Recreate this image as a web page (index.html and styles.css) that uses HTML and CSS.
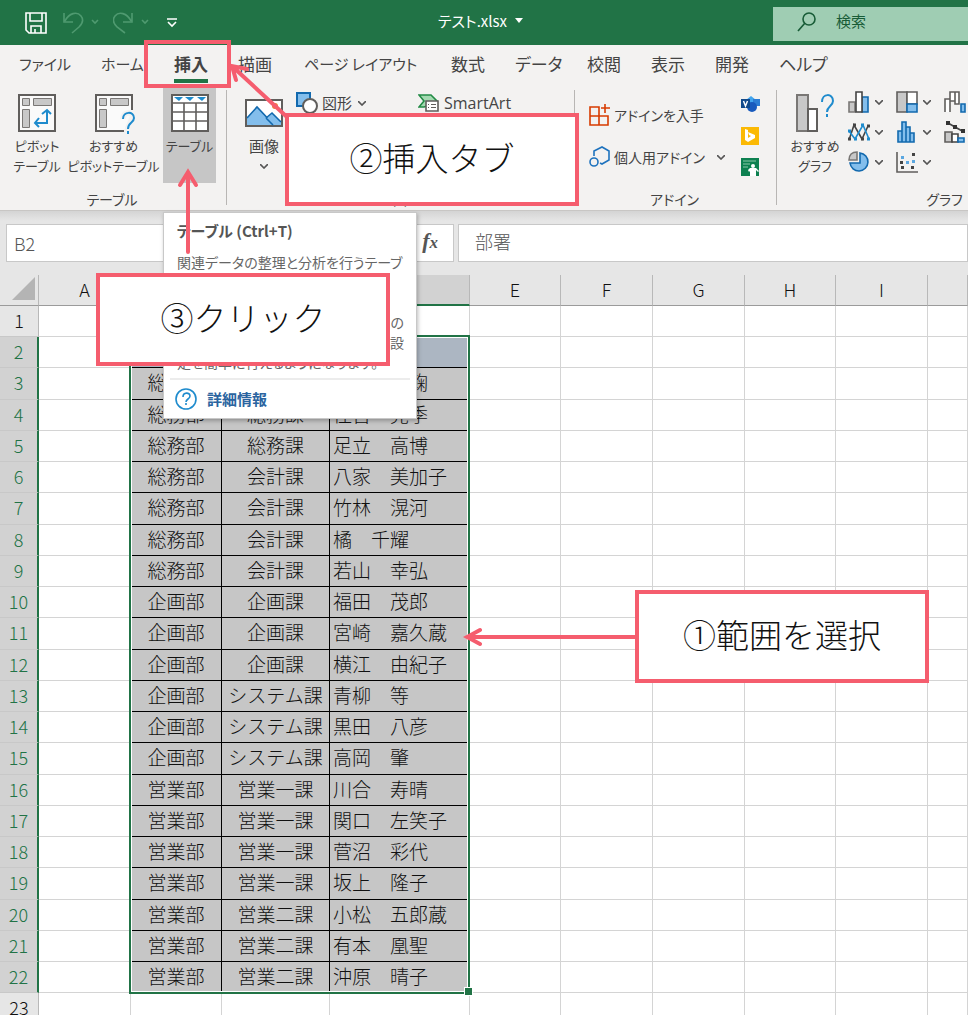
FILE: index.html
```html
<!DOCTYPE html>
<html lang="ja">
<head>
<meta charset="utf-8">
<title>テスト.xlsx</title>
<link rel="stylesheet" href="styles.css">
</head>
<body>
<header class="titlebar">
  <div class="quick">
    <button class="icon-btn" aria-label="保存"><svg width="22" height="22" viewBox="0 0 22 22" fill="none" stroke="#fff" stroke-width="1.600"><path d="M1 1h20v20H4l-3-3zM5 1v8h12V1M6 21v-7h10v7M10 17v4"/></svg></button>
    <button class="icon-btn undo" aria-label="元に戻す"><svg width="36" height="22" viewBox="0 0 36 22" fill="none" stroke="#4f9a70" stroke-width="1.600"><path d="M1 1v9h9M2 9C6 1 14-1 18 4s0 9-2 11l-7 6"/><path d="M29 8l3 3 3-3"/></svg></button>
    <button class="icon-btn redo" aria-label="やり直し"><svg width="36" height="22" viewBox="0 0 36 22" fill="none" stroke="#4f9a70" stroke-width="1.600"><path d="M19 1v9h-9M18 9C14 1 6-1 2 4s0 9 2 11l8 6"/><path d="M29 8l3 3 3-3"/></svg></button>
    <button class="icon-btn custom" aria-label="カスタマイズ"><svg width="10" height="10" viewBox="0 0 10 10" fill="none" stroke="#fff" stroke-width="1.600"><path d="M0 1h10M1 4l4 4 4-4"/></svg></button>
  </div>
  <button class="doc-name">テスト.xlsx <svg width="8" height="5" viewBox="0 0 8 5"><path d="M0 0h8L4 5z" fill="#fff"/></svg></button>
  <label class="search">
    <svg width="19" height="20" viewBox="0 0 19 20" fill="none" stroke="#185c37" stroke-width="1.600"><circle cx="12" cy="7" r="6"/><path d="M8 11l-7 8"/></svg>
    <input type="text" placeholder="検索" aria-label="検索">
  </label>
</header>

<nav class="tabs">
  <button>ファイル</button><button>ホーム</button><button class="active">挿入</button><button>描画</button><button>ページ レイアウト</button><button>数式</button><button>データ</button><button>校閲</button><button>表示</button><button>開発</button><button>ヘルプ</button>
</nav>

<section class="ribbon">
  <div class="group g-table">
    <div class="tools">
      <button class="big pivot"><svg width="38" height="38" viewBox="0 0 38 38" fill="none"><path d="M1 1h36v36H1z" fill="#fafafa" stroke="#605e5c" stroke-width="2"/><g fill="#c8c8c8" stroke="#797775"><path d="M4.500 4.500h7v7h-7zM15.500 4.500h18v7h-18zM4.500 15.500h7v18h-7z"/></g><path d="M17 29h12V16M21 24l-4 5 4 4M24 20l5-4 4 4" stroke="#1e8bcd" stroke-width="2"/></svg><span>ピボット<br>テーブル</span></button>
      <button class="big suggest"><svg width="40" height="40" viewBox="0 0 40 40" fill="none"><path d="M37 16V1H1v36h28" fill="#fafafa" stroke="#605e5c" stroke-width="2"/><g fill="#c8c8c8" stroke="#797775"><path d="M4.500 4.500h7v7h-7zM15.500 4.500h18v7h-18zM4.500 15.500h7v18h-7z"/></g><path d="M28 25c0-8 11-8 11-1 0 5-6 5-6 12M33 37v3" stroke="#f3f2f1" stroke-width="6"/><path d="M28 25c0-8 11-8 11-1 0 5-6 4-6 11M33 37v3" stroke="#1e8bcd" stroke-width="2"/></svg><span>おすすめ<br>ピボットテーブル</span></button>
      <button class="big pressed"><svg width="38" height="38" viewBox="0 0 38 38"><path d="M1 1h36v36H1z" fill="#fff" stroke="#605e5c" stroke-width="2"/><path d="M1 9h36M1 18h36M1 27h36M13 9v28M25 9v28" stroke="#605e5c" stroke-width="1.600"/><path d="M3 3h9l-4 4zM14 3h9l-4 4zM26 3h9l-4 4z" fill="#1e8bcd"/></svg><span>テーブル</span></button>
    </div>
    <div class="caption">テーブル</div>
  </div>
  <div class="group g-figure">
    <div class="tools">
      <button class="big picture"><svg width="38" height="38" viewBox="0 0 38 38"><path d="M1 6h36v26H1z" fill="#fff" stroke="#605e5c" stroke-width="2"/><circle cx="30" cy="12" r="3" fill="#ed7d31"/><path d="M2 24L12 13l17 18H2z" fill="#83beec"/><path d="M2 24L12 13l17 18" fill="none" stroke="#1269ae" stroke-width="1.600"/><path d="M21 25l6-6 9 9v3H27z" fill="#83beec"/><path d="M21 24l6-5 9 9M21 24l7 7" fill="none" stroke="#1269ae" stroke-width="1.600"/></svg><span>画像</span><svg class="chev" width="8" height="5" viewBox="0 0 8 5"><path d="M0 0l4 4 4-4"/></svg></button>
      <button class="small"><svg width="22" height="22" viewBox="0 0 22 22"><path d="M1 1h13v13H1z" fill="#83beec" stroke="#1269ae" stroke-width="2"/><circle cx="14" cy="14" r="7" fill="#fff" stroke="#605e5c" stroke-width="2"/></svg>図形<svg class="chev" width="8" height="5" viewBox="0 0 8 5"><path d="M0 0l4 4 4-4"/></svg></button>
      <button class="small smart"><svg width="22" height="18" viewBox="0 0 22 18"><path d="M1 1h12l6 6-3 3-10 3H1l5-6z" fill="#a3d9b1" stroke="#228b45" stroke-width="1.600"/><path d="M8 7h12v10H8z" fill="#fff" stroke="#605e5c" stroke-width="1.600"/><path d="M10 10.500h1M13 10.500h5M10 13.500h1M13 13.500h5" stroke="#605e5c"/></svg>SmartArt</button>
    </div>
    <div class="caption">図</div>
  </div>
  <div class="group g-addin">
    <div class="tools">
      <div class="stack">
        <button class="small"><svg width="21" height="22" viewBox="0 0 21 22" fill="none" stroke="#d83b01" stroke-width="1.600"><path d="M1 3h9v18H1zM1 12h18v9H10M10 12h9M16 0v9M12 4h9"/></svg>アドインを入手</button>
        <button class="small"><svg width="21" height="22" viewBox="0 0 21 22" fill="none" stroke="#1e73be" stroke-width="1.600"><path d="M5 10V5l8-4 7 4v9l-7 4-2-1"/><circle cx="5" cy="16" r="4"/></svg>個人用アドイン<svg class="chev" width="8" height="5" viewBox="0 0 8 5"><path d="M0 0l4 4 4-4"/></svg></button>
      </div>
      <div class="apps">
        <button aria-label="Visio"><svg width="19" height="18" viewBox="0 0 19 18"><path d="M10 0l5 4-5 5-5-5z" fill="#41a5ee"/><path d="M12 3h7v7h-7z" fill="#2b7cd3"/><circle cx="11" cy="11" r="5" fill="#185abd"/><path d="M0 3h9v9H0z" fill="#114a8b"/><path d="M2.500 5l2 5 2-5" fill="none" stroke="#fff" stroke-width="1.400"/></svg></button>
        <button aria-label="Bing"><svg width="18" height="18" viewBox="0 0 18 18"><path d="M0 0h18v18H0z" fill="#fbb904"/><path d="M4 2l3 1v8l3-2-2-1-1-3 7 3v3l-7 4-3-2z" fill="#fff"/></svg></button>
        <button aria-label="People Graph"><svg width="18" height="18" viewBox="0 0 18 18"><path d="M0 0h18v18H0z" fill="#0d8050"/><path d="M2 3h13M2 6h7M2 9h5" stroke="#8cc9a8"/><circle cx="12" cy="8" r="2" fill="#fff"/><path d="M7 12l2-2h6l3 3-1 1-2-2v6H9v-5l-1 1z" fill="#fff"/></svg></button>
      </div>
    </div>
    <div class="caption">アドイン</div>
  </div>
  <div class="group g-chart">
    <div class="tools">
      <button class="big rec"><svg width="38" height="38" viewBox="0 0 38 38" fill="none"><path d="M1 1h11v36H1z" fill="#c8c8c8" stroke="#797775" stroke-width="2"/><path d="M12 15h9v22h-9z" fill="#fff" stroke="#605e5c" stroke-width="2"/><path d="M26 8c0-9 11-9 11-1 0 5-6 5-6 11M31 20v3" stroke="#1e8bcd" stroke-width="2"/></svg><span>おすすめ<br>グラフ</span></button>
      <div class="charts">
        <button aria-label="縦棒"><svg width="22" height="22" viewBox="0 0 22 22" stroke-width="1.600"><path d="M1 11h6v10H1z" fill="#c8c8c8" stroke="#797775"/><path d="M14 6h6v15h-6z" fill="#83beec" stroke="#1269ae"/><path d="M8 1h6v20H8z" fill="#fff" stroke="#444"/></svg><svg class="chev" width="8" height="5" viewBox="0 0 8 5"><path d="M0 0l4 4 4-4"/></svg></button>
        <button aria-label="階層構造"><svg width="22" height="22" viewBox="0 0 22 22" stroke-width="1.600"><path d="M1 1h10v20H1z" fill="#c8c8c8" stroke="#605e5c"/><path d="M11 1h10v12H11z" fill="#fff" stroke="#605e5c"/><path d="M11 13h10v8H11z" fill="#83beec" stroke="#1269ae"/></svg><svg class="chev" width="8" height="5" viewBox="0 0 8 5"><path d="M0 0l4 4 4-4"/></svg></button>
        <button aria-label="ウォーターフォール"><svg width="22" height="22" viewBox="0 0 22 22" stroke-width="1.600"><path d="M1 21V8h5v13M6 9V1h5v9H6M11 4V1h4v12h-4V9" fill="#fff" stroke="#605e5c"/><path d="M17 13h4v8h-4z" fill="#83beec" stroke="#1269ae"/></svg></button>
        <button aria-label="折れ線"><svg width="22" height="20" viewBox="0 0 22 20" fill="none" stroke-width="1.600"><path d="M1 18L6 3l8 14 6-13" stroke="#444"/><path d="M1 9l6 8L15 3l6 14" stroke="#1e8bcd"/><path d="M0 17h3M5 3h3M13 17h3M19 4h3" stroke="#444" stroke-width="3"/><path d="M0 9h3M6 17h3M13 3h3M19 17h3" stroke="#1e8bcd" stroke-width="3"/></svg><svg class="chev" width="8" height="5" viewBox="0 0 8 5"><path d="M0 0l4 4 4-4"/></svg></button>
        <button aria-label="統計"><svg width="22" height="22" viewBox="0 0 22 22"><path d="M2 10h4v11H2zM6 1h4v20H6zM10 6h4v15h-4zM14 12h4v9h-4z" fill="#83beec" stroke="#1269ae" stroke-width="1.600"/></svg><svg class="chev" width="8" height="5" viewBox="0 0 8 5"><path d="M0 0l4 4 4-4"/></svg></button>
        <button aria-label="複合"><svg width="22" height="22" viewBox="0 0 22 22" stroke-width="1.600"><path d="M1 11h7v10H1z" fill="#c8c8c8" stroke="#605e5c"/><path d="M8 13h6v8H8z" fill="#fff" stroke="#444"/><path d="M14 17h6v4h-6z" fill="#83beec" stroke="#1269ae"/><path d="M4 2l7 4 9 5" fill="none" stroke="#444"/><path d="M2 2h4M9 6h4M17 10h4" stroke="#333" stroke-width="4"/></svg></button>
        <button aria-label="円"><svg width="22" height="22" viewBox="0 0 22 22" stroke-width="1.600"><path d="M12 2a9 9 0 1 1-10 10h10z" fill="#83beec" stroke="#1269ae"/><path d="M9 1v8H1c0-5 3-8 8-8z" fill="#c8c8c8" stroke="#797775"/></svg><svg class="chev" width="8" height="5" viewBox="0 0 8 5"><path d="M0 0l4 4 4-4"/></svg></button>
        <button aria-label="散布図"><svg width="22" height="22" viewBox="0 0 22 22"><path d="M1 1v20h21" fill="none" stroke="#605e5c" stroke-width="1.600"/><path d="M4 10h3v3H4zM16 2h3v3h-3zM5 15h3v3H5zM15 15h3v3h-3z" fill="#444"/><path d="M5 5h3v3H5zM10 10h3v3h-3zM16 9h3v3h-3z" fill="#5ba7e0"/></svg><svg class="chev" width="8" height="5" viewBox="0 0 8 5"><path d="M0 0l4 4 4-4"/></svg></button>
      </div>
    </div>
    <div class="caption">グラフ</div>
  </div>
</section>

<section class="formula">
  <input class="name-box" type="text" value="B2" aria-label="名前ボックス">
  <button class="fx"><i>f<small>x</small></i></button>
  <input class="formula-box" type="text" value="部署" aria-label="数式バー">
</section>

<main class="sheet">
<table class="grid">
<colgroup><col class="c-row"><col class="c-a"><col class="c-b"><col class="c-c"><col class="c-d"><col class="c-e"><col class="c-a"><col class="c-a"><col class="c-e"><col class="c-a"><col></colgroup>
<thead><tr><th class="corner"><svg width="23" height="23" viewBox="0 0 23 23"><path d="M23 0v23H0z" fill="#b4b4b4"/></svg></th><th>A</th><th class="sel"></th><th class="sel"></th><th class="sel"></th><th>E</th><th>F</th><th>G</th><th>H</th><th>I</th><th></th></tr></thead>
<tbody>
<tr><th>1</th><td></td><td></td><td></td><td></td><td></td><td></td><td></td><td></td><td></td><td></td></tr>
<tr class="data head"><th>2</th><td></td><td></td><td></td><td></td><td></td><td></td><td></td><td></td><td></td><td></td></tr>
<tr class="data"><th>3</th><td></td><td>総務部</td><td></td><td>　　　　鞠</td><td></td><td></td><td></td><td></td><td></td><td></td></tr>
<tr class="data"><th>4</th><td></td><td>総務部</td><td>総務課</td><td>住吉　亮季</td><td></td><td></td><td></td><td></td><td></td><td></td></tr>
<tr class="data"><th>5</th><td></td><td>総務部</td><td>総務課</td><td>足立　高博</td><td></td><td></td><td></td><td></td><td></td><td></td></tr>
<tr class="data"><th>6</th><td></td><td>総務部</td><td>会計課</td><td>八家　美加子</td><td></td><td></td><td></td><td></td><td></td><td></td></tr>
<tr class="data"><th>7</th><td></td><td>総務部</td><td>会計課</td><td>竹林　滉河</td><td></td><td></td><td></td><td></td><td></td><td></td></tr>
<tr class="data"><th>8</th><td></td><td>総務部</td><td>会計課</td><td>橘　千耀</td><td></td><td></td><td></td><td></td><td></td><td></td></tr>
<tr class="data"><th>9</th><td></td><td>総務部</td><td>会計課</td><td>若山　幸弘</td><td></td><td></td><td></td><td></td><td></td><td></td></tr>
<tr class="data"><th>10</th><td></td><td>企画部</td><td>企画課</td><td>福田　茂郎</td><td></td><td></td><td></td><td></td><td></td><td></td></tr>
<tr class="data"><th>11</th><td></td><td>企画部</td><td>企画課</td><td>宮崎　嘉久蔵</td><td></td><td></td><td></td><td></td><td></td><td></td></tr>
<tr class="data"><th>12</th><td></td><td>企画部</td><td>企画課</td><td>横江　由紀子</td><td></td><td></td><td></td><td></td><td></td><td></td></tr>
<tr class="data"><th>13</th><td></td><td>企画部</td><td>システム課</td><td>青柳　等</td><td></td><td></td><td></td><td></td><td></td><td></td></tr>
<tr class="data"><th>14</th><td></td><td>企画部</td><td>システム課</td><td>黒田　八彦</td><td></td><td></td><td></td><td></td><td></td><td></td></tr>
<tr class="data"><th>15</th><td></td><td>企画部</td><td>システム課</td><td>高岡　肇</td><td></td><td></td><td></td><td></td><td></td><td></td></tr>
<tr class="data"><th>16</th><td></td><td>営業部</td><td>営業一課</td><td>川合　寿晴</td><td></td><td></td><td></td><td></td><td></td><td></td></tr>
<tr class="data"><th>17</th><td></td><td>営業部</td><td>営業一課</td><td>関口　左笑子</td><td></td><td></td><td></td><td></td><td></td><td></td></tr>
<tr class="data"><th>18</th><td></td><td>営業部</td><td>営業一課</td><td>菅沼　彩代</td><td></td><td></td><td></td><td></td><td></td><td></td></tr>
<tr class="data"><th>19</th><td></td><td>営業部</td><td>営業一課</td><td>坂上　隆子</td><td></td><td></td><td></td><td></td><td></td><td></td></tr>
<tr class="data"><th>20</th><td></td><td>営業部</td><td>営業二課</td><td>小松　五郎蔵</td><td></td><td></td><td></td><td></td><td></td><td></td></tr>
<tr class="data"><th>21</th><td></td><td>営業部</td><td>営業二課</td><td>有本　凰聖</td><td></td><td></td><td></td><td></td><td></td><td></td></tr>
<tr class="data"><th>22</th><td></td><td>営業部</td><td>営業二課</td><td>沖原　晴子</td><td></td><td></td><td></td><td></td><td></td><td></td></tr>
<tr><th>23</th><td></td><td></td><td></td><td></td><td></td><td></td><td></td><td></td><td></td><td></td></tr>
</tbody>
</table>
<div class="selection"></div>
</main>

<aside class="tooltip">
  <h2>テーブル (Ctrl+T)</h2>
  <p>関連データの整理と分析を行うテーブ</p>
  <p class="more"><span>の</span><span>設</span></p>
  <p>定を簡単に行えるようになります。</p>
  <a href="#help"><svg width="22" height="22" viewBox="0 0 22 22" fill="none" stroke="#1e8bcd" stroke-width="1.600"><circle cx="11" cy="11" r="10"/><path d="M8 9c0-5 7-5 7-1 0 3-4 3-4 6M11 15v2"/></svg>詳細情報</a>
</aside>

<div class="mark tab-mark"></div>
<div class="mark callout call-2">②挿入タブ</div>
<div class="mark callout call-3">③クリック</div>
<div class="mark callout call-1">①範囲を選択</div>
<svg class="arrow arrow-2" width="64" height="58" viewBox="0 0 64 58"><path d="M60 56L6 6M20 8L5 5l4 14"/></svg>
<svg class="arrow arrow-3" width="24" height="86" viewBox="0 0 24 86"><path d="M12 84V5M4 17l8-13 8 13"/></svg>
<svg class="arrow arrow-1" width="174" height="20" viewBox="0 0 174 20"><path d="M172 10H5M17 3L4 10l13 7"/></svg>
</body>
</html>
```
FILE: styles.css
```css
* { box-sizing: border-box; }
body {
  margin: 0;
  height: 100vh;
  overflow: hidden;
  position: relative;
  display: flex;
  flex-direction: column;
  background: #fff;
  color: #444;
  font-family: "Noto Sans CJK JP", sans-serif;
  font-size: 15px;
  font-feature-settings: "palt";
}
button, input {
  font: inherit;
  font-feature-settings: inherit;
  color: inherit;
  border: 0;
  padding: 0;
  background: none;
}
button { white-space: nowrap; }
svg { display: block; flex: none; }
.chev { fill: none; stroke: #555; stroke-width: 1.6; }

.titlebar {
  height: 45px;
  flex: none;
  background: #217346;
  color: #fff;
  display: grid;
  grid-template-columns: 438px 1fr 195px;
  align-items: center;
}
.quick { display: flex; align-items: center; padding-left: 25px; }
.undo { margin-left: 16px; }
.redo { margin-left: 14px; }
.custom { margin-left: 18px; }
.doc-name { display: flex; align-items: center; gap: 8px; justify-self: start; line-height: 20px; padding-bottom: 4px; }
.search {
  height: 34px;
  display: flex;
  align-items: center;
  gap: 20px;
  padding-left: 24px;
  margin-top: 2px;
  background: #9fcdb3;
  color: #185c37;
}
.search svg { margin-bottom: 4px; }
.search input { flex: 1; min-width: 0; outline: 0; line-height: 20px; padding-bottom: 6px; }
.search input::placeholder { color: #185c37; opacity: 1; }

.tabs {
  height: 43px;
  flex: none;
  display: grid;
  grid-template-columns: 82px 73px 64px 66px 147px 64px 72px 64px 64px 64px 64px;
  padding-left: 19px;
  background: #f3f2f1;
  font-size: 17px;
}
.tabs button { justify-self: start; line-height: 38px; height: 38px; }
.tabs button:first-child, .tabs button:nth-child(5), .tabs button:nth-child(2) { font-size: 15px; }
.tabs .active { font-weight: 700; border-bottom: 4px solid #217346; }

.ribbon {
  height: 123px;
  flex: none;
  display: flex;
  overflow: hidden;
  background: #f3f2f1;
  border-bottom: 1px solid #c8c6c4;
  line-height: 20px;
}
.group { flex: none; position: relative; display: flex; flex-direction: column; }
.group + .group::before {
  content: "";
  position: absolute;
  left: 0;
  top: 2px;
  height: 115px;
  border-left: 1px solid #b8b6b4;
}
.tools { height: 101px; display: flex; align-items: flex-start; }
.caption { text-align: center; font-size: 14px; }
.g-table { width: 226px; padding-left: 10px; }
.g-table .caption { padding-right: 12px; }
.g-figure { width: 348px; padding-left: 18px; }
.g-figure .caption { padding-right: 18px; }
.g-addin { width: 202px; padding-left: 15px; }
.g-addin .caption { padding-right: 16px; }
.g-chart { width: 336px; padding-left: 13px; }
.g-chart .caption { padding-right: 12px; }
.big { display: flex; flex-direction: column; align-items: center; font-size: 13px; padding-top: 6px; gap: 4px; }
.pivot { width: 54px; }
.suggest { width: 99px; gap: 2px; }
.suggest svg { margin-left: 2px; }
.pressed { width: 53px; height: 95px; background: #c6c6c6; }
.picture { width: 40px; font-size: 15px; }
.picture .chev { margin-top: 4px; }
.rec { width: 52px; }
.small { display: flex; align-items: center; gap: 4px; height: 30px; }
.g-figure .small { margin-left: 12px; }
.small .chev { margin-left: 8px; }
.g-figure .small .chev { margin-left: 2px; }
.g-figure .smart { margin-left: 52px; font-family: "Open Sans", sans-serif; font-size: 16px; }
.stack { width: 152px; padding-top: 12px; display: grid; gap: 12px; font-size: 14px; }
.apps { display: grid; gap: 13px; padding-top: 8px; }
.charts {
  display: grid;
  grid-template-columns: repeat(3, 48px);
  grid-auto-rows: 22px;
  row-gap: 8px;
  padding: 3px 0 0 7px;
}
.charts button { display: flex; align-items: center; gap: 5px; }

.formula {
  flex: none;
  display: flex;
  gap: 4px;
  padding: 13px 0 13px 6px;
  background: linear-gradient(#d4d4d4, #e6e6e6 10px);
}
.formula > * { height: 38px; background: #fff; border: 1px solid #c8c8c8; color: #555; }
.name-box { width: 230px; padding-left: 7px; font-size: 18px; font-weight: 300; }
.fx { width: 214px; padding: 0 15px 4px 0; text-align: right; font-family: "Liberation Serif", serif; font-size: 22px; font-weight: 700; }
.fx small { font-size: 17px; }
.formula-box { flex: 1; min-width: 0; padding: 0 0 4px 16px; font-size: 18px; font-weight: 300; }

.sheet { flex: 1; min-height: 0; overflow: hidden; position: relative; }
.grid { width: 100%; table-layout: fixed; border-spacing: 0; font-feature-settings: normal; }
.c-row { width: 39px; }
.c-a { width: 92px; }
.c-b { width: 91px; }
.c-c { width: 108px; }
.c-d { width: 140px; }
.c-e { width: 91px; }
.grid th, .grid td { padding: 0 0 3px; height: 31px; line-height: 24px; white-space: nowrap; }
.grid tr:nth-child(4n+3) th, .grid tr:nth-child(4n+3) td { height: 32px; }
.grid th { font-weight: 300; font-size: 18px; color: #111; background: #e6e6e6; border-right: 1px solid #b8b8b8; border-bottom: 1px solid #c8c8c8; }
.grid thead th { border-bottom-color: #9b9b9b; }
.grid thead .sel { background: #d2d2d2; border-bottom: 2px solid #217346; }
.grid .corner svg { margin-left: 12px; }
.grid td { border-right: 1px solid #d4d4d4; border-bottom: 1px solid #d4d4d4; color: #111; font-size: 19px; font-weight: 300; }
.grid .data th { background: #d2d2d2; color: #217346; border-right: 2px solid #217346; }
.grid .data td:nth-child(3), .grid .data td:nth-child(4), .grid .data td:nth-child(5) { background: #c6c6c6; border-color: #000; text-align: center; }
.grid .data td:nth-child(5) { text-align: left; padding-left: 3px; }
.grid .head td:nth-child(3), .grid .head td:nth-child(4), .grid .head td:nth-child(5) { background: #acb6c2; }
.selection {
  position: absolute;
  left: 129px;
  top: 60px;
  width: 341px;
  height: 659px;
  border: 2px solid #217346;
  box-shadow: inset 0 0 0 1px #fff;
}
.selection::after {
  content: "";
  position: absolute;
  right: -5px;
  bottom: -4px;
  width: 7px;
  height: 7px;
  background: #217346;
  border: 1px solid #fff;
}

.tooltip {
  position: absolute;
  left: 163px;
  top: 212px;
  width: 254px;
  height: 207px;
  padding: 8px 6px 0;
  background: #fff;
  border: 1px solid #c8c8c8;
  box-shadow: 1px 2px 4px #0004;
  line-height: 20px;
  color: #666;
  font-size: 14px;
  white-space: nowrap;
}
.tooltip h2 { margin: 0 0 11px 7px; font-size: 15px; color: #555; line-height: 20px; }
.tooltip p { margin: 0 0 0 7px; }
.tooltip .more { display: grid; padding-top: 40px; justify-items: end; padding-right: 6px; }
.tooltip a {
  display: flex;
  align-items: center;
  gap: 10px;
  margin-top: 6px;
  padding: 8px 5px 0;
  border-top: 2px solid #ececec;
  color: #2b64a0;
  font-size: 15px;
  font-weight: 700;
  text-decoration: none;
}

.mark { position: absolute; border: 4px solid #f55d6e; }
.tab-mark { left: 144px; top: 40px; width: 87px; height: 48px; }
.callout {
  width: 294px;
  height: 93px;
  display: flex;
  align-items: center;
  justify-content: center;
  padding-bottom: 6px;
  background: #fff;
  color: #111;
  font-size: 33px;
  font-weight: 300;
  font-feature-settings: normal;
}
.call-2 { left: 285px; top: 113px; }
.call-3 { left: 96px; top: 273px; }
.call-1 { left: 635px; top: 590px; }
.arrow { position: absolute; fill: none; stroke: #f55d6e; stroke-width: 4; stroke-linecap: round; }
.arrow-2 { left: 227px; top: 61px; }
.arrow-3 { left: 176px; top: 168px; }
.arrow-1 { left: 463px; top: 627px; }
```
